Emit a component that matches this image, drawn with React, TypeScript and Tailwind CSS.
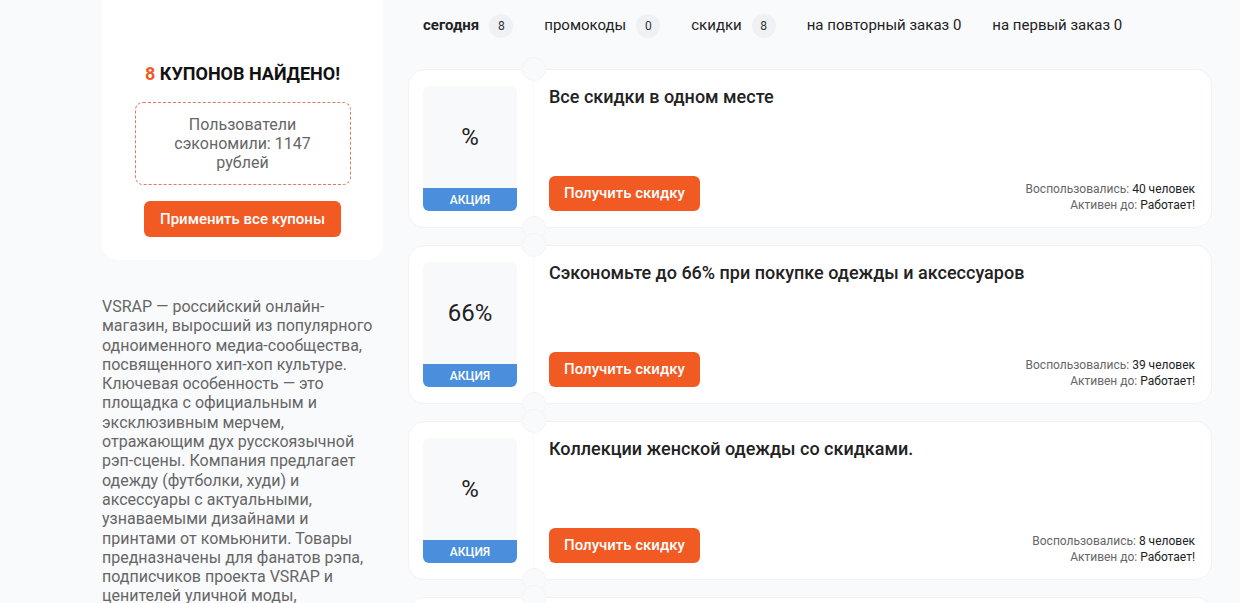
import React from 'react';

interface Coupon {
  value: string;
  title: string;
  used: number;
}

const coupons: Coupon[] = [
  { value: '%', title: 'Все скидки в одном месте', used: 40 },
  { value: '66%', title: 'Сэкономьте до 66% при покупке одежды и аксессуаров', used: 39 },
  { value: '%', title: 'Коллекции женской одежды со скидками.', used: 8 },
  { value: '%', title: 'Распродажа', used: 5 },
];

const tabs = [
  { label: 'сегодня', count: '8', active: true, badge: true },
  { label: 'промокоды', count: '0', active: false, badge: true },
  { label: 'скидки', count: '8', active: false, badge: true },
  { label: 'на повторный заказ', count: '0', active: false, badge: false },
  { label: 'на первый заказ', count: '0', active: false, badge: false },
];

function CouponCard({ coupon }: { coupon: Coupon }) {
  return (
    <div className="relative flex h-[159px] shrink-0 rounded-2xl border border-[#f0f2f6] bg-white">
      {/* Value block */}
      <div className="flex w-[124px] shrink-0 py-4 pl-[14px] pr-4">
        <div className="flex w-[94px] flex-col overflow-hidden rounded-md bg-[#f8f9fb]">
          <div className="flex flex-1 items-center justify-center text-[24px] text-[#222]">
            {coupon.value}
          </div>
          <div className="flex h-[23px] items-center justify-center bg-[#4a8fdb] text-[12px] font-medium text-white">
            АКЦИЯ
          </div>
        </div>
      </div>

      {/* Divider with notches */}
      <div className="relative w-0 border-l border-dotted border-[#eef0f3]">
        <div className="absolute -top-[13px] -left-[12px] h-6 w-6 rounded-full border border-[#f3f4f7] bg-[#f9fafc]" />
        <div className="absolute -bottom-[13px] -left-[12px] h-6 w-6 rounded-full border border-[#f3f4f7] bg-[#f9fafc]" />
      </div>

      {/* Body */}
      <div className="flex flex-1 flex-col justify-between pb-4 pt-[17px] pl-[15px] pr-4">
        <div className="text-[18px] font-medium leading-5 text-[#222]">{coupon.title}</div>
        <div className="flex items-end justify-between">
          <button className="h-[35px] rounded-md bg-[#f15a22] px-[15px] text-[15px] font-medium text-white">
            Получить скидку
          </button>
          <div className="-mb-[2px] text-right text-[12px] leading-4 text-[#666]">
            <div>
              Воспользовались: <span className="text-[#222]">{coupon.used} человек</span>
            </div>
            <div>
              Активен до: <span className="text-[#222]">Работает!</span>
            </div>
          </div>
        </div>
      </div>
    </div>
  );
}

export default function App() {
  return (
    <div className="h-[603px] overflow-hidden bg-[#f9fafc] font-['Roboto','Liberation_Sans',sans-serif]">
      <div className="flex gap-[25px] pl-[102px]">
        {/* Sidebar */}
        <div className="w-[281px] shrink-0">
          <div className="flex flex-col items-center rounded-b-2xl bg-white pb-[23px] pt-[62px]">
            <div className="text-[18px] font-bold leading-6 text-[#111]">
              <span className="text-[#f15a22]">8</span> КУПОНОВ НАЙДЕНО!
            </div>
            <div className="mt-[16px] flex h-[83px] w-[216px] items-center justify-center rounded-lg border border-dashed border-[#e07a5f] px-6 text-center text-[16px] leading-[19px] text-[#666]">
              Пользователи сэкономили: 1147 рублей
            </div>
            <button className="mt-4 h-9 w-[197px] rounded-md bg-[#f15a22] text-[15px] font-medium text-white">
              Применить все купоны
            </button>
          </div>
          <p className="mt-[37px] pr-[7px] text-[16px] leading-[19.3px] text-[#666]">
            VSRAP — российский онлайн-магазин, выросший из популярного одноименного медиа-сообщества,
            посвященного хип-хоп культуре. Ключевая особенность — это площадка с официальным и
            эксклюзивным мерчем, отражающим дух русскоязычной рэп-сцены. Компания предлагает одежду
            (футболки, худи) и аксессуары с актуальными, узнаваемыми дизайнами и принтами от комьюнити.
            Товары предназначены для фанатов рэпа, подписчиков проекта VSRAP и ценителей уличной моды,
            стремящихся подчеркнуть свою принадлежность к культуре.
          </p>
        </div>

        {/* Main */}
        <div className="w-[804px] shrink-0">
          <div className="flex h-[51px] items-center gap-[31px] pl-[15px] text-[15px] text-[#222]">
            {tabs.map((t) => (
              <div key={t.label} className="flex items-center gap-[10px]">
                <span className={t.active ? 'font-bold' : ''}>
                  {t.label}
                  {!t.badge && ` ${t.count}`}
                </span>
                {t.badge && (
                  <span className="flex h-6 w-6 items-center justify-center rounded-full bg-[#f0f1f4] text-[12px] text-[#333]">
                    {t.count}
                  </span>
                )}
              </div>
            ))}
          </div>
          <div className="mt-[18px] flex flex-col gap-[17px]">
            {coupons.map((c, i) => (
              <CouponCard key={i} coupon={c} />
            ))}
          </div>
        </div>
      </div>
    </div>
  );
}
